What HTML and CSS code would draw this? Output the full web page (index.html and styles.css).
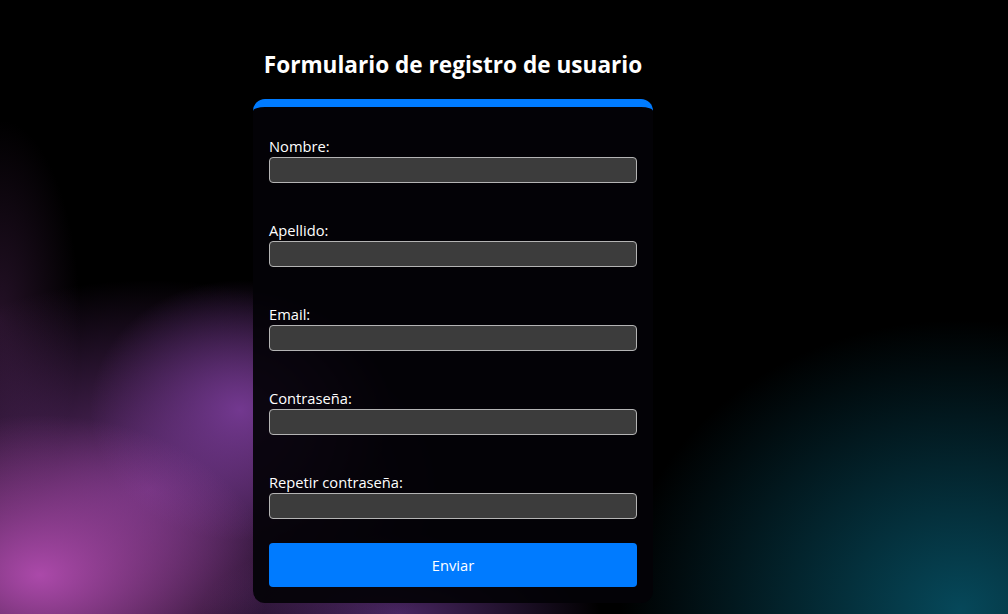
FILE: index.html
```html
<!DOCTYPE html>
<html lang="es">
<head>
  <meta charset="UTF-8">
  <meta name="viewport" content="width=device-width, initial-scale=1.0">
  <title>Registro de usuario</title>
  <link rel="stylesheet" href="styles.css">
</head>
<body>
  <main class="page">
    <h1 class="title">Formulario de registro de usuario</h1>
    <form class="card">
      <div class="field">
        <label for="nombre">Nombre:</label>
        <input type="text" id="nombre">
      </div>
      <div class="field">
        <label for="apellido">Apellido:</label>
        <input type="text" id="apellido">
      </div>
      <div class="field">
        <label for="email">Email:</label>
        <input type="email" id="email">
      </div>
      <div class="field">
        <label for="password">Contraseña:</label>
        <input type="password" id="password">
      </div>
      <div class="field">
        <label for="password2">Repetir contraseña:</label>
        <input type="password" id="password2">
      </div>
      <button type="submit" class="submit">Enviar</button>
    </form>
  </main>
</body>
</html>
```

FILE: styles.css
```css
* {
  margin: 0;
  padding: 0;
  box-sizing: border-box;
}
html, body {
  height: 100%;
}
body {
  font-family: "Open Sans", "Noto Sans", sans-serif;
  color: #fff;
  overflow: hidden;
  background-color: #000;
  background-image:
    radial-gradient(ellipse 230px 160px at 40px 575px, rgba(178, 76, 176, 0.95), rgba(178, 76, 176, 0) 100%),
    radial-gradient(ellipse 150px 130px at 240px 410px, rgba(118, 58, 148, 0.95), rgba(118, 58, 148, 0) 100%),
    radial-gradient(ellipse 320px 210px at 150px 490px, rgba(120, 56, 140, 0.8), rgba(120, 56, 140, 0) 100%),
    radial-gradient(ellipse 200px 80px at 400px 614px, rgba(96, 50, 130, 0.75), rgba(96, 50, 130, 0) 100%),
    radial-gradient(ellipse 80px 200px at 0px 320px, rgba(60, 28, 64, 0.6), rgba(60, 28, 64, 0) 100%),
    radial-gradient(ellipse 340px 290px at 960px 610px, rgba(6, 72, 90, 1), rgba(6, 72, 90, 0) 100%);
}
.page {
  width: 400px;
  margin-left: 253px;
  padding-top: 50px;
}
.title {
  font-size: 22.6px;
  font-weight: 700;
  line-height: 30px;
  text-align: center;
  margin-bottom: 19px;
}
.card {
  display: flex;
  flex-direction: column;
  background: rgba(3, 2, 6, 0.92);
  border-top: 8px solid #007bff;
  border-radius: 12px;
  padding: 29px 16px 16px;
}
.field {
  display: flex;
  flex-direction: column;
  gap: 1px;
  margin-bottom: 37px;
}
.field:last-of-type {
  margin-bottom: 24px;
}
.field label {
  font-size: 14.7px;
  line-height: 20px;
}
.field input {
  height: 26px;
  background: #3c3c3c;
  border: 1px solid #b4b4b4;
  border-radius: 4px;
  color: #fff;
  padding: 0 6px;
  font: inherit;
  font-size: 14px;
}
.submit {
  height: 44px;
  background: #007bff;
  border: none;
  border-radius: 4px;
  color: #fff;
  font: inherit;
  font-size: 14.7px;
  cursor: pointer;
}
```
